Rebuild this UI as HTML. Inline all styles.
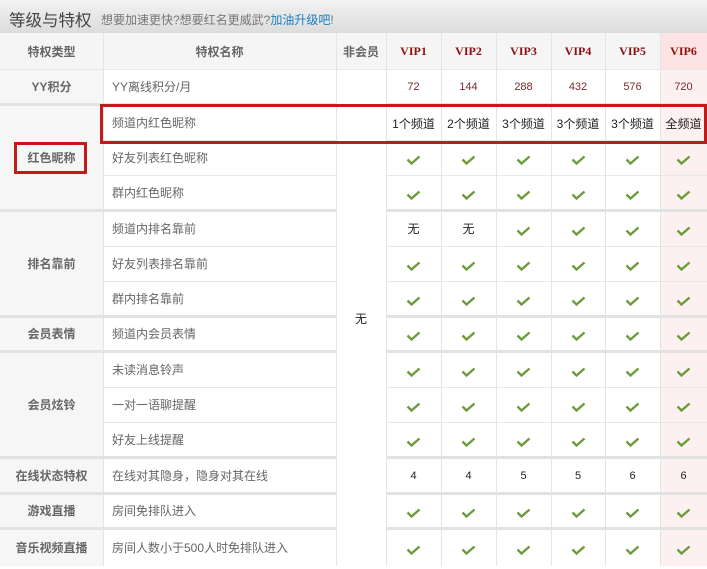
<!DOCTYPE html>
<html><head><meta charset="utf-8"><style>
*{margin:0;padding:0;box-sizing:border-box}
body{width:707px;height:566px;overflow:hidden;background:#fff;font-family:"Liberation Sans","Noto Sans CJK SC",sans-serif;font-size:12px;color:#666;position:relative}
.a{position:absolute}
.hdr{left:0;top:0;width:707px;height:33px;background:linear-gradient(#f2f2f2,#dcdcdc)}
.c{position:absolute;display:flex;align-items:center;justify-content:center;white-space:nowrap}
.l{justify-content:flex-start;padding-left:9px}
.b{font-weight:bold;color:#666}
.v{font-weight:bold;color:#8b1010;font-family:"Liberation Serif","Noto Serif CJK SC",serif;font-size:12px}
.n{color:#7a2a2a;font-size:11px}
.k{color:#222;font-size:12px}
</style></head><body>
<div class="a hdr"></div>
<div class="a" style="left:9px;top:7px;font-size:16.5px;color:#444">等级与特权</div>
<div class="a" style="left:101px;top:11px;font-size:12px;color:#777">想要加速更快?想要红名更威武?<span style="color:#1a7fc0">加油升级吧</span>!</div>
<div class="a" style="left:0;top:33px;width:707px;height:36px;background:#f5f5f5"></div>
<div class="a" style="left:0;top:69px;width:103px;height:497px;background:#f6f6f6"></div>
<div class="a" style="left:660px;top:69px;width:47px;height:497px;background:#fdf0f0"></div>
<div class="a" style="left:660px;top:33px;width:47px;height:36px;background:#fde3e3"></div>
<div id="lines"></div>
<div class="c b" style="left:0;top:33px;width:103px;height:36px">特权类型</div>
<div class="c b" style="left:103px;top:33px;width:233px;height:36px">特权名称</div>
<div class="c b" style="left:336px;top:33px;width:50px;height:36px">非会员</div>
<div class="c v" style="left:386px;top:33px;width:55px;height:36px">VIP1</div>
<div class="c v" style="left:441px;top:33px;width:55px;height:36px">VIP2</div>
<div class="c v" style="left:496px;top:33px;width:55px;height:36px">VIP3</div>
<div class="c v" style="left:551px;top:33px;width:54px;height:36px">VIP4</div>
<div class="c v" style="left:605px;top:33px;width:55px;height:36px">VIP5</div>
<div class="c v" style="left:660px;top:33px;width:47px;height:36px">VIP6</div>
<div class="c b" style="left:0;top:69px;width:103px;height:35px">YY积分</div>
<div class="c b" style="left:0;top:104px;width:103px;height:106px">红色昵称</div>
<div class="c b" style="left:0;top:210px;width:103px;height:106px">排名靠前</div>
<div class="c b" style="left:0;top:316px;width:103px;height:35px">会员表情</div>
<div class="c b" style="left:0;top:351px;width:103px;height:106px">会员炫铃</div>
<div class="c b" style="left:0;top:457px;width:103px;height:36px">在线状态特权</div>
<div class="c b" style="left:0;top:493px;width:103px;height:35px">游戏直播</div>
<div class="c b" style="left:0;top:528px;width:103px;height:38px">音乐视频直播</div>
<div class="c l" style="left:103px;top:69px;width:233px;height:35px">YY离线积分/月</div>
<div class="c l" style="left:103px;top:104px;width:233px;height:36px">频道内红色昵称</div>
<div class="c l" style="left:103px;top:140px;width:233px;height:35px">好友列表红色昵称</div>
<div class="c l" style="left:103px;top:175px;width:233px;height:35px">群内红色昵称</div>
<div class="c l" style="left:103px;top:210px;width:233px;height:36px">频道内排名靠前</div>
<div class="c l" style="left:103px;top:246px;width:233px;height:35px">好友列表排名靠前</div>
<div class="c l" style="left:103px;top:281px;width:233px;height:35px">群内排名靠前</div>
<div class="c l" style="left:103px;top:316px;width:233px;height:35px">频道内会员表情</div>
<div class="c l" style="left:103px;top:351px;width:233px;height:36px">未读消息铃声</div>
<div class="c l" style="left:103px;top:387px;width:233px;height:35px">一对一语聊提醒</div>
<div class="c l" style="left:103px;top:422px;width:233px;height:35px">好友上线提醒</div>
<div class="c l" style="left:103px;top:457px;width:233px;height:36px">在线对其隐身，隐身对其在线</div>
<div class="c l" style="left:103px;top:493px;width:233px;height:35px">房间免排队进入</div>
<div class="c l" style="left:103px;top:528px;width:233px;height:38px">房间人数小于500人时免排队进入</div>
<div class="c k" style="left:336px;top:104px;width:50px;height:428px">无</div>
<div class="c n" style="left:386px;top:69px;width:55px;height:35px">72</div>
<div class="c n" style="left:441px;top:69px;width:55px;height:35px">144</div>
<div class="c n" style="left:496px;top:69px;width:55px;height:35px">288</div>
<div class="c n" style="left:551px;top:69px;width:54px;height:35px">432</div>
<div class="c n" style="left:605px;top:69px;width:55px;height:35px">576</div>
<div class="c n" style="left:660px;top:69px;width:47px;height:35px">720</div>
<div class="c k" style="left:386px;top:104px;width:55px;height:38px">1个频道</div>
<div class="c k" style="left:441px;top:104px;width:55px;height:38px">2个频道</div>
<div class="c k" style="left:496px;top:104px;width:55px;height:38px">3个频道</div>
<div class="c k" style="left:551px;top:104px;width:54px;height:38px">3个频道</div>
<div class="c k" style="left:605px;top:104px;width:55px;height:38px">3个频道</div>
<div class="c k" style="left:660px;top:104px;width:47px;height:38px">全频道</div>
<div class="c k" style="left:386px;top:210px;width:55px;height:36px">无</div>
<div class="c k" style="left:441px;top:210px;width:55px;height:36px">无</div>
<div class="c k" style="left:386px;top:457px;width:55px;height:38px;font-size:11px">4</div>
<div class="c k" style="left:441px;top:457px;width:55px;height:38px;font-size:11px">4</div>
<div class="c k" style="left:496px;top:457px;width:55px;height:38px;font-size:11px">5</div>
<div class="c k" style="left:551px;top:457px;width:54px;height:38px;font-size:11px">5</div>
<div class="c k" style="left:605px;top:457px;width:55px;height:38px;font-size:11px">6</div>
<div class="c k" style="left:660px;top:457px;width:47px;height:38px;font-size:11px">6</div>
<div id="checks"></div>
<div class="a" style="left:100px;top:104px;width:607px;height:40px;border:3px solid #c01a1a"></div>
<div class="a" style="left:14px;top:142px;width:73px;height:32px;border:3px solid #c01a1a"></div>
<script>
var cols=[[386,55],[441,55],[496,55],[551,54],[605,55],[660,47]];
var tops=[69,104,140,175,210,246,281,316,351,387,422,457,493,528,566];
var grp={104:1,210:1,316:1,351:1,457:1,493:1,528:1};
var L='';
function hl(x,w,t,g){L+='<div class="a" style="left:'+x+'px;top:'+(t-(g?1:0))+'px;width:'+w+'px;height:'+(g?3:1)+'px;background:'+(g?'#e2e2e2':'#e8e8e8')+'"></div>';}
tops.slice(0,14).forEach(function(t){var g=grp[t];
 if(t==69){hl(0,707,t,0);return;}
 if(g)hl(0,336,t,1);else hl(103,233,t,0);
 hl(386,321,t,g);});
[103,336,386,441,496,551,605,660].forEach(function(x){L+='<div class="a" style="left:'+x+'px;top:33px;width:1px;height:533px;background:#e4e4e4"></div>';});
document.getElementById('lines').innerHTML=L;
var C='';
var ck='<svg width="15" height="11" viewBox="0 0 15 11"><polyline points="1.5,4.5 5.5,8.5 13.5,1.5" fill="none" stroke="#6b9b3a" stroke-width="2.3"/></svg>';
for(var r=2;r<14;r++){if(r==11)continue;for(var c=0;c<6;c++){if(r==4&&c<2)continue;var t=tops[r],h=tops[r+1]-t;C+='<div class="c" style="left:'+cols[c][0]+'px;top:'+(t+3)+'px;width:'+cols[c][1]+'px;height:'+h+'px">'+ck+'</div>';}}
document.getElementById('checks').innerHTML=C;
</script>
</body></html>
